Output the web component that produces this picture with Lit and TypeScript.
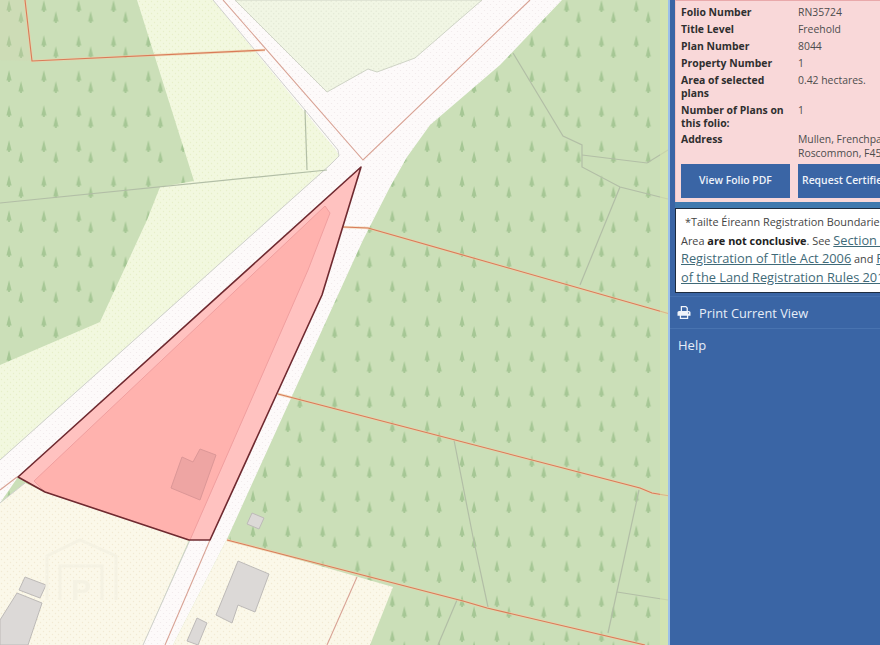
import { LitElement, html, css, svg } from "lit";
import { customElement } from "lit/decorators.js";

const rows: [string, string[], string[]][] = [
  ["r17", ["Folio Number"], ["RN35724"]],
  ["r17", ["Title Level"], ["Freehold"]],
  ["r17", ["Plan Number"], ["8044"]],
  ["r17", ["Property Number"], ["1"]],
  ["r", ["Area of selected", "plans"], ["0.42 hectares."]],
  ["r", ["Number of Plans on", "this folio:"], ["1"]],
  ["r", ["Address"], ["Mullen, Frenchpark,", "Roscommon, F45 XY00"]],
];

const poly = (cls: string, pts: string) => svg`<polygon class=${cls} points=${pts}></polygon>`;
const line = (cls: string, pts: string) => svg`<polyline class=${cls} points=${pts}></polyline>`;

const grayLines = [
  "513,53 563,136 582,145 582,167 620,187 668,199",
  "582,155 647,163 668,150",
  "620,187 580,285",
  "454,440 473,537 488,607",
  "639,490 608,633",
  "617,592 668,600",
  "457,600 438,645",
  "305,110 307,170",
  "0,203 327,170",
];
const orangeLines = [
  "343,227 368,228 670,314",
  "278,394 640,488 652,493 670,496",
  "227,540 463,601 487,608 645,645",
];
const buildings = [
  "238,561 269,574 255,612 238,605 232,623 216,615",
  "197,618 207,623 198,645 187,641",
  "25,577 46,585 40,598 19,590",
  "17,593 42,603 28,645 0,645 0,620",
  "252,513 264,518 259,529 247,524",
];

@customElement("app-root")
export class AppRoot extends LitElement {
  static styles = css`
    :host { display: block; width: 880px; height: 645px; overflow: hidden; font-family: "Open Sans", "Liberation Sans", sans-serif; }
    .page { display: flex; width: 880px; height: 645px; overflow: hidden; }
    .map { flex: none; width: 670px; height: 645px; display: block; filter: blur(0.4px); }
    .forest { fill: #cbdfb8; }
    .trees { fill: url(#trees); }
    .tan { fill: #d9d5b4; opacity: .18; }
    .road { fill: url(#roadDots); }
    .yellow { fill: url(#yellowDots); }
    .cream { fill: url(#creamDots); }
    .hatch { fill: url(#hatchDots); stroke: #cfd4c6; stroke-width: 1; }
    .gray { fill: none; stroke: #b2bea6; stroke-width: 1.2; }
    .grayroad { fill: none; stroke: #cfd0cc; stroke-width: 1; }
    .redroad { fill: none; stroke: #d8a294; stroke-width: 1.1; }
    .halo { fill: none; stroke: #eecfa8; stroke-width: 2.6; opacity: .7; }
    .orange { fill: none; stroke: #d97b58; stroke-width: 1.1; }
    .bldg { fill: #dcd9d7; stroke: #bdbab8; stroke-width: 1; }
    .pl { fill: #ffc2c0; }
    .pd { fill: #ffb2ae; stroke: #f09f9f; stroke-width: 1; }
    .pb { fill: #eea5a3; stroke: #dc9797; stroke-width: 1; }
    .edge { fill: none; stroke: #6f2a30; stroke-width: 1.6; stroke-linejoin: round; }
    .wm { fill: none; stroke: #f5f2e3; stroke-width: 3; }
    .wmt { fill: #f5f2e3; font: 700 30px "Liberation Sans", sans-serif; }
    .band { fill: #d8e6ad; opacity: .55; }
    .rim { fill: #9dc0e8; }

    .side { flex: none; width: 210px; height: 645px; background: #3a65a5; overflow: hidden; display: flex; flex-direction: column; }
    .card { width: 300px; height: 202px; margin-left: 5px; box-sizing: border-box; background: #f9d8d9; border-top: 1px solid #e9a9ab; border-left: 1px solid #f3c3c5; padding: 3px 0 0 5px; display: flex; flex-direction: column; color: #3b3b3b; font-size: 10.4px; line-height: 13.6px; }
    .row { display: grid; grid-template-columns: 110px 1fr; column-gap: 7px; }
    .r17 { height: 17px; align-items: center; }
    .r { padding: 1.7px 0 1px; }
    .label { font-weight: 700; color: #2f2f2f; }
    .val { white-space: nowrap; color: #4d4d4d; }
    .btns { display: flex; gap: 8px; margin-top: 2.4px; }
    .btn { flex: none; height: 34px; width: 109px; background: #3a65a5; color: #eef3fa; font-size: 10.4px; font-weight: 600; display: flex; align-items: center; justify-content: center; white-space: nowrap; }
    .btn.long { width: 140px; justify-content: flex-start; padding-left: 4px; box-sizing: border-box; }
    .gap { height: 6px; background: #4079ae; margin-left: 5px; }
    .note { width: 300px; height: 85px; flex: none; box-sizing: border-box; margin-left: 5px; background: #fff; border: 1px solid #1d2b3e; padding: 4px 0 0 5px; color: #444; font-size: 10.9px; line-height: 18px; white-space: nowrap; overflow: hidden; }
    .note > div { height: 18.2px; }
    .note b { color: #222; font-weight: 700; }
    .note a { color: #3f6a78; text-decoration: underline; font-size: 12.8px; }
    .indent { padding-left: 4px; }
    .item { display: flex; align-items: center; gap: 8px; padding-left: 8px; color: #e6edf7; font-size: 13px; }
    .print { margin-top: 3px; padding-left: 7px; font-size: 12.8px; border-top: 1px solid #4570ae; border-bottom: 1px solid #4873b0; box-sizing: border-box; height: 33px; }
    .help { height: 32px; }
    .icon { width: 14px; height: 13px; fill: #f0f4fa; flex: none; }
  `;

  render() {
    return html`<div class="page">
      <svg class="map" viewBox="0 0 670 645" xmlns="http://www.w3.org/2000/svg">
        <defs>
          <pattern id="trees" patternUnits="userSpaceOnUse" width="34.85" height="35">
            <path fill="#a6c795" d="M9 0 L11.6 10.5 L9.9 10.5 L9.9 12 L8.1 12 L8.1 10.5 L6.4 10.5Z"></path>
            <path fill="#a6c795" d="M21 11 L23.6 21.5 L21.9 21.5 L21.9 23 L20.1 23 L20.1 21.5 L18.4 21.5Z"></path>
          </pattern>
          <pattern id="yellowDots" patternUnits="userSpaceOnUse" width="6" height="6">
            <rect width="6" height="6" fill="#f2f8df"></rect>
            <circle cx="1.5" cy="1.5" r=".7" fill="#e7efc9"></circle>
            <circle cx="4.5" cy="4.5" r=".7" fill="#e7efc9"></circle>
          </pattern>
          <pattern id="creamDots" patternUnits="userSpaceOnUse" width="6" height="6">
            <rect width="6" height="6" fill="#fbf8e9"></rect>
            <circle cx="1.5" cy="1.5" r=".7" fill="#f2ead3"></circle>
            <circle cx="4.5" cy="4.5" r=".7" fill="#f2ead3"></circle>
          </pattern>
          <pattern id="roadDots" patternUnits="userSpaceOnUse" width="6" height="6">
            <rect width="6" height="6" fill="#fdfafa"></rect>
            <circle cx="1.5" cy="1.5" r=".6" fill="#f1e9ea"></circle>
            <circle cx="4.5" cy="4.5" r=".6" fill="#f1e9ea"></circle>
          </pattern>
          <pattern id="hatchDots" patternUnits="userSpaceOnUse" width="5" height="5">
            <rect width="5" height="5" fill="#f1f6e4"></rect>
            <circle cx="1.2" cy="1.2" r=".7" fill="#e3e9d5"></circle>
            <circle cx="3.7" cy="3.7" r=".7" fill="#e3e9d5"></circle>
          </pattern>
        </defs>

        <rect class="forest" width="670" height="645"></rect>
        <rect class="trees" width="670" height="645"></rect>
        ${poly("tan", "0,0 25,0 32,61 0,60")}

        <!-- road network -->
        ${poly("road", "205,0 562,0 500,65 430,125 407,157 390,187 363,240 227,539 173,645 143,645 190,540 18,477 0,503 0,460 330,165 339,155")}
        ${poly("yellow", "137,0 213,0 336,150 339,156 330,165 0,460 0,365 100,322 147,220 160,187 194,181")}
        ${poly("hatch", "235,0 327,92 368,69 377,72 415,58 482,0")}
        ${poly("cream", "0,503 25,483 45,492 189,540 143,645 0,645")}
        ${poly("cream", "227,539 393,587 370,645 173,645")}

        ${line("grayroad", "213,0 305,110 338,150 339,156 330,165 0,460")}
        ${line("grayroad", "25,483 0,503")}
        ${line("grayroad", "190,540 143,645")}
        ${line("redroad", "223,0 363,160 530,0")}
        ${line("redroad", "17,477 0,490")}
        ${line("redroad", "210,540 165,645")}
        ${line("redroad", "357,577 327,645")}

        ${grayLines.map((p) => line("gray", p))}
        ${orangeLines.map((p) => line("halo", p))}
        ${line("halo", "25,0 32,61 265,50")}
        ${orangeLines.map((p) => line("orange", p))}
        ${line("orange", "25,0 32,61 265,50")}

        ${buildings.map((p) => poly("bldg", p))}

        <!-- watermark -->
        <path class="wm" d="M47 600 V556 L80 540 L116 556 V600 M60 600 V566 H102 V600"></path>
        <text class="wmt" x="71" y="600">P</text>

        <!-- selected parcel -->
        ${poly("pl", "361,167 322,295 210,540 189,540 45,492 18,477")}
        ${poly("pd", "34,481 325,206 330,213 308,270 190,540 45,492")}
        ${poly("pb", "182,457 193,462 200,449 216,455 200,500 171,488")}
        ${poly("edge", "361,167 322,295 210,540 189,540 45,492 18,477")}

        <rect class="band" x="660" width="8" height="645"></rect>
        <rect class="rim" x="668" width="2" height="645"></rect>
      </svg>

      <aside class="side">
        <section class="card">
          ${rows.map(([cls, l, v]) => html`<div class="row ${cls}">
            <div class="label">${l.map((t, i) => html`${i ? html`<br />` : ""}${t}`)}</div>
            <div class="val">${v.map((t, i) => html`${i ? html`<br />` : ""}${t}`)}</div>
          </div>`)}
          <div class="btns">
            <div class="btn">View Folio PDF</div>
            <div class="btn long">Request Certified Copy</div>
          </div>
        </section>
        <div class="gap"></div>
        <section class="note">
          <div class="indent">*Tailte Éireann Registration Boundaries and</div>
          <div>Area <b>are not conclusive</b>. See <a>Section 85 of the</a></div>
          <div><a>Registration of Title Act 2006</a> and <a>Rule 8</a></div>
          <div><a>of the Land Registration Rules 2012</a></div>
        </section>
        <div class="item print">
          <svg class="icon" viewBox="0 0 512 512" xmlns="http://www.w3.org/2000/svg"><path d="M128 0h210l70 70v122h-50V90l-40-40H178v142h-50V0zM64 192h384c35 0 64 29 64 64v128h-90v128H90V384H0V256c0-35 29-64 64-64zm76 192v78h232v-78H140zm292-136a24 24 0 1 0 0 48 24 24 0 0 0 0-48z"></path></svg>
          <span>Print Current View</span>
        </div>
        <div class="item help">Help</div>
      </aside>
    </div>`;
  }
}
